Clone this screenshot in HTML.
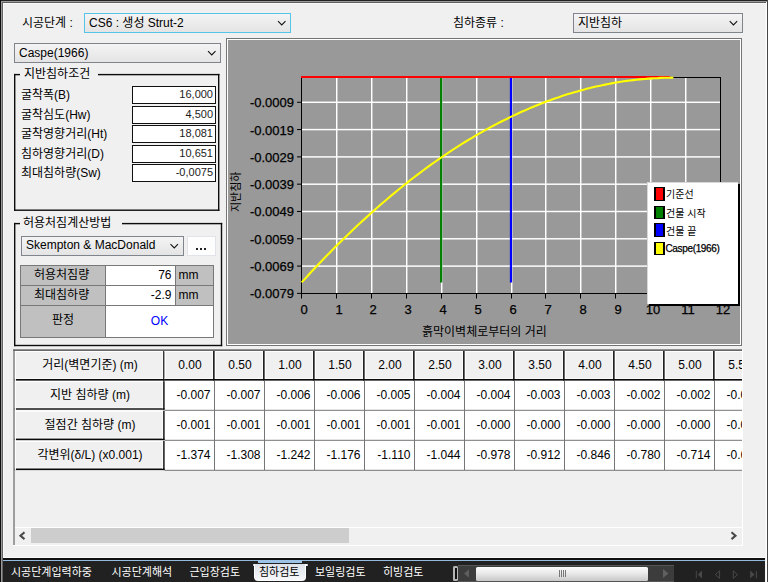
<!DOCTYPE html>
<html><head><meta charset="utf-8"><title>ui</title>
<style>
html,body{margin:0;padding:0}
body{width:768px;height:582px;overflow:hidden;background:#f0f0f0;position:relative;font-family:"Liberation Sans",sans-serif;font-size:12px;color:#000}
.a{position:absolute}
svg.o{position:absolute;left:0;top:0;pointer-events:none}
svg.o text{font-family:"Liberation Sans","Noto Sans CJK KR",sans-serif}
</style></head><body>
<div class="a" style="left:0px;top:0px;width:768px;height:1px;background:#222"></div><div class="a" style="left:1px;top:1px;width:766px;height:1px;background:#9a9a9a"></div><div class="a" style="left:2px;top:2px;width:765px;height:1px;background:#5e5e5e"></div><div class="a" style="left:3px;top:3px;width:762px;height:1px;background:#f9f9f9"></div><div class="a" style="left:0px;top:0px;width:1px;height:582px;background:#0e0e0e"></div><div class="a" style="left:1px;top:1px;width:1px;height:581px;background:#9a9a9a"></div><div class="a" style="left:2px;top:2px;width:1px;height:580px;background:#646464"></div><div class="a" style="left:3px;top:3px;width:1px;height:579px;background:#f9f9f9"></div><div class="a" style="left:765px;top:3px;width:1px;height:579px;background:#f4f4f4"></div><div class="a" style="left:766px;top:2px;width:1px;height:580px;background:#fff"></div><div class="a" style="left:767px;top:0px;width:1px;height:582px;background:#444"></div><div class="a" style="left:84px;top:13px;width:207px;height:20px;box-sizing:border-box;border:1px solid #56c4e8;background:linear-gradient(#f4f4f4,#e4e4e4);"></div><div class="a" style="left:573px;top:13px;width:170px;height:20px;box-sizing:border-box;border:1px solid #80848c;background:linear-gradient(#f4f4f4,#e4e4e4);"></div><div class="a" style="left:14px;top:43px;width:207px;height:20px;box-sizing:border-box;border:1px solid #80848c;background:linear-gradient(#f4f4f4,#e4e4e4);"></div><div class="a" style="left:132px;top:86px;width:84px;height:18px;box-sizing:border-box;border:1px solid #111;background:#fff"></div><div class="a" style="left:132px;top:106px;width:84px;height:18px;box-sizing:border-box;border:1px solid #111;background:#fff"></div><div class="a" style="left:132px;top:125px;width:84px;height:18px;box-sizing:border-box;border:1px solid #111;background:#fff"></div><div class="a" style="left:132px;top:145px;width:84px;height:18px;box-sizing:border-box;border:1px solid #111;background:#fff"></div><div class="a" style="left:132px;top:164px;width:84px;height:18px;box-sizing:border-box;border:1px solid #111;background:#fff"></div><div class="a" style="left:21px;top:236px;width:163px;height:20px;box-sizing:border-box;border:1px solid #80848c;background:linear-gradient(#f4f4f4,#e4e4e4);"></div><div class="a" style="left:186.5px;top:235.5px;width:29.5px;height:20.5px;box-sizing:border-box;border:1px solid #e0e3e8;background:#fdfdfd"></div><div class="a" style="left:196px;top:248px;width:2px;height:2px;background:#222"></div><div class="a" style="left:200px;top:248px;width:2px;height:2px;background:#222"></div><div class="a" style="left:204px;top:248px;width:2px;height:2px;background:#222"></div><div class="a" style="left:20px;top:265px;width:194px;height:73px;background:#787878"></div><div class="a" style="left:21px;top:266px;width:84px;height:19px;background:#c0c0c0"></div><div class="a" style="left:106px;top:266px;width:69px;height:19px;background:#fff"></div><div class="a" style="left:176px;top:266px;width:37px;height:19px;background:#c0c0c0"></div><div class="a" style="left:21px;top:286px;width:84px;height:19px;background:#c0c0c0"></div><div class="a" style="left:106px;top:286px;width:69px;height:19px;background:#fff"></div><div class="a" style="left:176px;top:286px;width:37px;height:19px;background:#c0c0c0"></div><div class="a" style="left:21px;top:306px;width:84px;height:31px;background:#c0c0c0"></div><div class="a" style="left:106px;top:306px;width:107px;height:31px;background:#fff"></div><div class="a" style="left:106px;top:265px;width:65.5px;height:20px;line-height:20px;text-align:right;font-size:12px;color:#000;white-space:nowrap;">76</div><div class="a" style="left:106px;top:285px;width:65.5px;height:20px;line-height:20px;text-align:right;font-size:12px;color:#000;white-space:nowrap;">-2.9</div><div class="a" style="left:178.5px;top:265px;width:30px;height:20px;line-height:20px;text-align:left;font-size:12px;color:#000;white-space:nowrap;">mm</div><div class="a" style="left:178.5px;top:285px;width:30px;height:20px;line-height:20px;text-align:left;font-size:12px;color:#000;white-space:nowrap;">mm</div><div class="a" style="left:106px;top:306px;width:107px;height:31px;line-height:31px;text-align:center;font-size:12px;color:#0000ff;white-space:nowrap;">OK</div><div class="a" style="left:226px;top:38px;width:516px;height:308px;box-sizing:border-box;border:1px solid #747474;background:#fff"></div><div class="a" style="left:228px;top:40px;width:512px;height:304px;background:#999"></div><svg class="o" width="768" height="582" viewBox="0 0 768 582"><rect x="336" y="78" width="1.45" height="215" fill="#fff"/><rect x="371" y="78" width="1.45" height="215" fill="#fff"/><rect x="406" y="78" width="1.45" height="215" fill="#fff"/><rect x="441" y="78" width="1.45" height="215" fill="#fff"/><rect x="476" y="78" width="1.45" height="215" fill="#fff"/><rect x="511" y="78" width="1.45" height="215" fill="#fff"/><rect x="545" y="78" width="1.45" height="215" fill="#fff"/><rect x="580" y="78" width="1.45" height="215" fill="#fff"/><rect x="615" y="78" width="1.45" height="215" fill="#fff"/><rect x="650" y="78" width="1.45" height="215" fill="#fff"/><rect x="685" y="78" width="1.45" height="215" fill="#fff"/><rect x="302" y="101.57" width="418" height="1.45" fill="#fff"/><rect x="302" y="128.87" width="418" height="1.45" fill="#fff"/><rect x="302" y="156.17" width="418" height="1.45" fill="#fff"/><rect x="302" y="183.47" width="418" height="1.45" fill="#fff"/><rect x="302" y="210.77" width="418" height="1.45" fill="#fff"/><rect x="302" y="238.07" width="418" height="1.45" fill="#fff"/><rect x="302" y="265.37" width="418" height="1.45" fill="#fff"/><rect x="301" y="76" width="1" height="218" fill="#000"/><rect x="301" y="293" width="420" height="1" fill="#000"/><rect x="720" y="77" width="1" height="217" fill="#000"/><rect x="670" y="77" width="51" height="1" fill="#000"/><rect x="297" y="101.77" width="4" height="1" fill="#000"/><rect x="297" y="129.07" width="4" height="1" fill="#000"/><rect x="297" y="156.37" width="4" height="1" fill="#000"/><rect x="297" y="183.67" width="4" height="1" fill="#000"/><rect x="297" y="210.97" width="4" height="1" fill="#000"/><rect x="297" y="238.27" width="4" height="1" fill="#000"/><rect x="297" y="265.57" width="4" height="1" fill="#000"/><rect x="297" y="292.87" width="4" height="1" fill="#000"/><rect x="301" y="294" width="1" height="4.5" fill="#000"/><rect x="336" y="294" width="1" height="4.5" fill="#000"/><rect x="371" y="294" width="1" height="4.5" fill="#000"/><rect x="406" y="294" width="1" height="4.5" fill="#000"/><rect x="441" y="294" width="1" height="4.5" fill="#000"/><rect x="476" y="294" width="1" height="4.5" fill="#000"/><rect x="511" y="294" width="1" height="4.5" fill="#000"/><rect x="545" y="294" width="1" height="4.5" fill="#000"/><rect x="580" y="294" width="1" height="4.5" fill="#000"/><rect x="615" y="294" width="1" height="4.5" fill="#000"/><rect x="650" y="294" width="1" height="4.5" fill="#000"/><rect x="685" y="294" width="1" height="4.5" fill="#000"/><rect x="720" y="294" width="1" height="4.5" fill="#000"/><rect x="301" y="76" width="369" height="2" fill="#ff0000"/><rect x="440.04" y="78" width="2.2" height="204.5" fill="#008000"/><rect x="509.86" y="78" width="2.2" height="204.5" fill="#0000ff"/><polyline points="301.6,282.4 304.7,279.1 307.8,275.7 310.9,272.3 314.0,269.0 317.1,265.7 320.2,262.5 323.3,259.3 326.4,256.1 329.5,252.9 332.6,249.7 335.7,246.6 338.8,243.5 341.9,240.5 345.0,237.5 348.1,234.5 351.2,231.5 354.3,228.5 357.4,225.6 360.5,222.7 363.6,219.9 366.7,217.1 369.8,214.3 372.9,211.5 376.0,208.7 379.1,206.0 382.2,203.3 385.3,200.7 388.4,198.0 391.5,195.4 394.6,192.9 397.7,190.3 400.8,187.8 403.9,185.3 407.0,182.9 410.0,180.4 413.1,178.0 416.2,175.7 419.3,173.3 422.4,171.0 425.5,168.7 428.6,166.4 431.7,164.2 434.8,162.0 437.9,159.8 441.0,157.7 444.1,155.6 447.2,153.5 450.3,151.4 453.4,149.4 456.5,147.4 459.6,145.4 462.7,143.4 465.8,141.5 468.9,139.6 472.0,137.8 475.1,135.9 478.2,134.1 481.3,132.4 484.4,130.6 487.5,128.9 490.6,127.2 493.7,125.5 496.8,123.9 499.9,122.3 503.0,120.7 506.1,119.2 509.2,117.6 512.3,116.1 515.4,114.7 518.5,113.2 521.6,111.8 524.7,110.5 527.8,109.1 530.9,107.8 534.0,106.5 537.1,105.2 540.2,104.0 543.3,102.8 546.4,101.6 549.5,100.5 552.6,99.3 555.7,98.2 558.8,97.2 561.9,96.1 565.0,95.1 568.1,94.1 571.2,93.2 574.3,92.3 577.4,91.4 580.5,90.5 583.6,89.7 586.7,88.8 589.8,88.1 592.9,87.3 596.0,86.6 599.1,85.9 602.2,85.2 605.3,84.6 608.4,84.0 611.5,83.4 614.6,82.8 617.7,82.3 620.8,81.8 623.8,81.3 626.9,80.9 630.0,80.5 633.1,80.1 636.2,79.7 639.3,79.4 642.4,79.1 645.5,78.9 648.6,78.6 651.7,78.4 654.8,78.2 657.9,78.1 661.0,77.9 664.1,77.8 667.2,77.8 670.3,77.7 673.4,77.7" fill="none" stroke="#ffff00" stroke-width="2.1" stroke-linejoin="round"/></svg><div class="a" style="left:236px;top:94.5px;width:58px;height:16px;line-height:16px;text-align:right;font-size:13px;color:#000;white-space:nowrap;-webkit-text-stroke:0.25px #000;">-0.0009</div><div class="a" style="left:236px;top:122.5px;width:58px;height:16px;line-height:16px;text-align:right;font-size:13px;color:#000;white-space:nowrap;-webkit-text-stroke:0.25px #000;">-0.0019</div><div class="a" style="left:236px;top:149.5px;width:58px;height:16px;line-height:16px;text-align:right;font-size:13px;color:#000;white-space:nowrap;-webkit-text-stroke:0.25px #000;">-0.0029</div><div class="a" style="left:236px;top:176.5px;width:58px;height:16px;line-height:16px;text-align:right;font-size:13px;color:#000;white-space:nowrap;-webkit-text-stroke:0.25px #000;">-0.0039</div><div class="a" style="left:236px;top:203.5px;width:58px;height:16px;line-height:16px;text-align:right;font-size:13px;color:#000;white-space:nowrap;-webkit-text-stroke:0.25px #000;">-0.0049</div><div class="a" style="left:236px;top:231.5px;width:58px;height:16px;line-height:16px;text-align:right;font-size:13px;color:#000;white-space:nowrap;-webkit-text-stroke:0.25px #000;">-0.0059</div><div class="a" style="left:236px;top:258.5px;width:58px;height:16px;line-height:16px;text-align:right;font-size:13px;color:#000;white-space:nowrap;-webkit-text-stroke:0.25px #000;">-0.0069</div><div class="a" style="left:236px;top:285.5px;width:58px;height:16px;line-height:16px;text-align:right;font-size:13px;color:#000;white-space:nowrap;-webkit-text-stroke:0.25px #000;">-0.0079</div><div class="a" style="left:289px;top:302px;width:30px;height:16px;line-height:16px;text-align:center;font-size:13px;color:#000;white-space:nowrap;-webkit-text-stroke:0.25px #000;">0</div><div class="a" style="left:324px;top:302px;width:30px;height:16px;line-height:16px;text-align:center;font-size:13px;color:#000;white-space:nowrap;-webkit-text-stroke:0.25px #000;">1</div><div class="a" style="left:358px;top:302px;width:30px;height:16px;line-height:16px;text-align:center;font-size:13px;color:#000;white-space:nowrap;-webkit-text-stroke:0.25px #000;">2</div><div class="a" style="left:393px;top:302px;width:30px;height:16px;line-height:16px;text-align:center;font-size:13px;color:#000;white-space:nowrap;-webkit-text-stroke:0.25px #000;">3</div><div class="a" style="left:428px;top:302px;width:30px;height:16px;line-height:16px;text-align:center;font-size:13px;color:#000;white-space:nowrap;-webkit-text-stroke:0.25px #000;">4</div><div class="a" style="left:463px;top:302px;width:30px;height:16px;line-height:16px;text-align:center;font-size:13px;color:#000;white-space:nowrap;-webkit-text-stroke:0.25px #000;">5</div><div class="a" style="left:498px;top:302px;width:30px;height:16px;line-height:16px;text-align:center;font-size:13px;color:#000;white-space:nowrap;-webkit-text-stroke:0.25px #000;">6</div><div class="a" style="left:533px;top:302px;width:30px;height:16px;line-height:16px;text-align:center;font-size:13px;color:#000;white-space:nowrap;-webkit-text-stroke:0.25px #000;">7</div><div class="a" style="left:568px;top:302px;width:30px;height:16px;line-height:16px;text-align:center;font-size:13px;color:#000;white-space:nowrap;-webkit-text-stroke:0.25px #000;">8</div><div class="a" style="left:603px;top:302px;width:30px;height:16px;line-height:16px;text-align:center;font-size:13px;color:#000;white-space:nowrap;-webkit-text-stroke:0.25px #000;">9</div><div class="a" style="left:638px;top:302px;width:30px;height:16px;line-height:16px;text-align:center;font-size:13px;color:#000;white-space:nowrap;-webkit-text-stroke:0.25px #000;">10</div><div class="a" style="left:673px;top:302px;width:30px;height:16px;line-height:16px;text-align:center;font-size:13px;color:#000;white-space:nowrap;-webkit-text-stroke:0.25px #000;">11</div><div class="a" style="left:708px;top:302px;width:30px;height:16px;line-height:16px;text-align:center;font-size:13px;color:#000;white-space:nowrap;-webkit-text-stroke:0.25px #000;">12</div><div class="a" style="left:647px;top:182px;width:91px;height:122px;background:#d8d8d8"></div><div class="a" style="left:648px;top:183px;width:90px;height:121px;background:#fff"></div><div class="a" style="left:738px;top:184px;width:2px;height:122px;background:#000"></div><div class="a" style="left:649px;top:304px;width:91px;height:2px;background:#000"></div><div class="a" style="left:654px;top:187px;width:11px;height:14px;background:#000"></div><div class="a" style="left:655.5px;top:188px;width:7.5px;height:11.5px;background:#ff0000"></div><div class="a" style="left:654px;top:206px;width:11px;height:13px;background:#000"></div><div class="a" style="left:655.5px;top:207px;width:7.5px;height:10.5px;background:#008000"></div><div class="a" style="left:654px;top:223px;width:11px;height:14px;background:#000"></div><div class="a" style="left:655.5px;top:224px;width:7.5px;height:11.5px;background:#0000ff"></div><div class="a" style="left:654px;top:242px;width:11px;height:13px;background:#000"></div><div class="a" style="left:655.5px;top:243px;width:7.5px;height:10.5px;background:#ffff00"></div><div class="a" style="left:665.5px;top:242px;width:70px;height:14px;line-height:14px;text-align:left;font-size:10px;color:#000;white-space:nowrap;letter-spacing:-0.35px;-webkit-text-stroke:0.25px #000;">Caspe(1966)</div><div class="a" style="left:13px;top:350px;width:730px;height:196px;background:#fff"></div><div class="a" style="left:14px;top:351px;width:728px;height:194px;background:#f0f0f0"></div><svg class="o" width="768" height="582" viewBox="0 0 768 582"><clipPath id="c139850923547568"><rect x="14" y="351" width="728" height="194"/></clipPath><g clip-path="url(#c139850923547568)"><rect x="164.6" y="380.6" width="600" height="89.5" fill="#fff"/><rect x="14" y="350.8" width="151" height="1.2" fill="#fff"/><rect x="14" y="378" width="151" height="1" fill="#fafafa"/><rect x="14" y="379" width="150.6" height="1.6" fill="#0a0a0a"/><rect x="163.1" y="351" width="1.5" height="29.6" fill="#0a0a0a"/><rect x="162.1" y="351" width="1" height="28" fill="#fafafa"/><rect x="14" y="381" width="151" height="1.2" fill="#fff"/><rect x="14" y="407.3" width="151" height="1" fill="#fafafa"/><rect x="14" y="408.3" width="150.6" height="1.4" fill="#0a0a0a"/><rect x="163.1" y="381.2" width="1.5" height="28.5" fill="#0a0a0a"/><rect x="162.1" y="381.2" width="1" height="27.1" fill="#fafafa"/><rect x="14" y="410.5" width="151" height="1.2" fill="#fff"/><rect x="14" y="437.6" width="151" height="1" fill="#fafafa"/><rect x="14" y="438.6" width="150.6" height="1.6" fill="#0a0a0a"/><rect x="163.1" y="410.7" width="1.5" height="29.5" fill="#0a0a0a"/><rect x="162.1" y="410.7" width="1" height="27.9" fill="#fafafa"/><rect x="14" y="440.8" width="151" height="1.2" fill="#fff"/><rect x="14" y="467.5" width="151" height="1" fill="#fafafa"/><rect x="14" y="468.5" width="150.6" height="1.6" fill="#0a0a0a"/><rect x="163.1" y="441" width="1.5" height="29.1" fill="#0a0a0a"/><rect x="162.1" y="441" width="1" height="27.5" fill="#fafafa"/><rect x="14.75" y="351" width="1.2" height="119" fill="#fff"/><rect x="164.6" y="351" width="1.2" height="28" fill="#fff"/><rect x="164.6" y="351" width="600" height="1" fill="#fff"/><rect x="164.6" y="378" width="600" height="1" fill="#fafafa"/><rect x="212.1" y="351" width="1" height="28" fill="#fafafa"/><rect x="214.6" y="351" width="1.2" height="28" fill="#fff"/><rect x="262.1" y="351" width="1" height="28" fill="#fafafa"/><rect x="264.6" y="351" width="1.2" height="28" fill="#fff"/><rect x="312.1" y="351" width="1" height="28" fill="#fafafa"/><rect x="314.6" y="351" width="1.2" height="28" fill="#fff"/><rect x="362.1" y="351" width="1" height="28" fill="#fafafa"/><rect x="364.6" y="351" width="1.2" height="28" fill="#fff"/><rect x="412.1" y="351" width="1" height="28" fill="#fafafa"/><rect x="414.6" y="351" width="1.2" height="28" fill="#fff"/><rect x="462.1" y="351" width="1" height="28" fill="#fafafa"/><rect x="464.6" y="351" width="1.2" height="28" fill="#fff"/><rect x="512.1" y="351" width="1" height="28" fill="#fafafa"/><rect x="514.6" y="351" width="1.2" height="28" fill="#fff"/><rect x="562.1" y="351" width="1" height="28" fill="#fafafa"/><rect x="564.6" y="351" width="1.2" height="28" fill="#fff"/><rect x="612.1" y="351" width="1" height="28" fill="#fafafa"/><rect x="614.6" y="351" width="1.2" height="28" fill="#fff"/><rect x="662.1" y="351" width="1" height="28" fill="#fafafa"/><rect x="664.6" y="351" width="1.2" height="28" fill="#fff"/><rect x="712.1" y="351" width="1" height="28" fill="#fafafa"/><rect x="714.6" y="351" width="1.2" height="28" fill="#fff"/><rect x="762.1" y="351" width="1" height="28" fill="#fafafa"/><rect x="764.6" y="351" width="1.2" height="28" fill="#fff"/><rect x="213.1" y="350" width="1.5" height="30.6" fill="#0a0a0a"/><rect x="263.1" y="350" width="1.5" height="30.6" fill="#0a0a0a"/><rect x="313.1" y="350" width="1.5" height="30.6" fill="#0a0a0a"/><rect x="363.1" y="350" width="1.5" height="30.6" fill="#0a0a0a"/><rect x="413.1" y="350" width="1.5" height="30.6" fill="#0a0a0a"/><rect x="463.1" y="350" width="1.5" height="30.6" fill="#0a0a0a"/><rect x="513.1" y="350" width="1.5" height="30.6" fill="#0a0a0a"/><rect x="563.1" y="350" width="1.5" height="30.6" fill="#0a0a0a"/><rect x="613.1" y="350" width="1.5" height="30.6" fill="#0a0a0a"/><rect x="663.1" y="350" width="1.5" height="30.6" fill="#0a0a0a"/><rect x="713.1" y="350" width="1.5" height="30.6" fill="#0a0a0a"/><rect x="763.1" y="350" width="1.5" height="30.6" fill="#0a0a0a"/><rect x="164.6" y="379" width="600" height="1.6" fill="#0a0a0a"/><rect x="214" y="380.6" width="1" height="89.5" fill="#767676"/><rect x="264" y="380.6" width="1" height="89.5" fill="#767676"/><rect x="314" y="380.6" width="1" height="89.5" fill="#767676"/><rect x="364" y="380.6" width="1" height="89.5" fill="#767676"/><rect x="414" y="380.6" width="1" height="89.5" fill="#767676"/><rect x="464" y="380.6" width="1" height="89.5" fill="#767676"/><rect x="514" y="380.6" width="1" height="89.5" fill="#767676"/><rect x="564" y="380.6" width="1" height="89.5" fill="#767676"/><rect x="614" y="380.6" width="1" height="89.5" fill="#767676"/><rect x="664" y="380.6" width="1" height="89.5" fill="#767676"/><rect x="714" y="380.6" width="1" height="89.5" fill="#767676"/><rect x="764" y="380.6" width="1" height="89.5" fill="#767676"/><rect x="164.6" y="409.8" width="600" height="1" fill="#767676"/><rect x="164.6" y="439.8" width="600" height="1" fill="#767676"/><rect x="164.6" y="469.8" width="600" height="1" fill="#767676"/></g></svg><div class="a" style="left:0;top:0;width:742px;height:545px;overflow:hidden"><div class="a" style="left:165px;top:355px;width:50px;height:20px;line-height:20px;text-align:center;font-size:12px;color:#000;white-space:nowrap;">0.00</div><div class="a" style="left:165px;top:385px;width:45.5px;height:20px;line-height:20px;text-align:right;font-size:12px;color:#000;white-space:nowrap;">-0.007</div><div class="a" style="left:165px;top:415px;width:45.5px;height:20px;line-height:20px;text-align:right;font-size:12px;color:#000;white-space:nowrap;">-0.001</div><div class="a" style="left:165px;top:445px;width:45.5px;height:20px;line-height:20px;text-align:right;font-size:12px;color:#000;white-space:nowrap;">-1.374</div><div class="a" style="left:215px;top:355px;width:50px;height:20px;line-height:20px;text-align:center;font-size:12px;color:#000;white-space:nowrap;">0.50</div><div class="a" style="left:215px;top:385px;width:45.5px;height:20px;line-height:20px;text-align:right;font-size:12px;color:#000;white-space:nowrap;">-0.007</div><div class="a" style="left:215px;top:415px;width:45.5px;height:20px;line-height:20px;text-align:right;font-size:12px;color:#000;white-space:nowrap;">-0.001</div><div class="a" style="left:215px;top:445px;width:45.5px;height:20px;line-height:20px;text-align:right;font-size:12px;color:#000;white-space:nowrap;">-1.308</div><div class="a" style="left:265px;top:355px;width:50px;height:20px;line-height:20px;text-align:center;font-size:12px;color:#000;white-space:nowrap;">1.00</div><div class="a" style="left:265px;top:385px;width:45.5px;height:20px;line-height:20px;text-align:right;font-size:12px;color:#000;white-space:nowrap;">-0.006</div><div class="a" style="left:265px;top:415px;width:45.5px;height:20px;line-height:20px;text-align:right;font-size:12px;color:#000;white-space:nowrap;">-0.001</div><div class="a" style="left:265px;top:445px;width:45.5px;height:20px;line-height:20px;text-align:right;font-size:12px;color:#000;white-space:nowrap;">-1.242</div><div class="a" style="left:315px;top:355px;width:50px;height:20px;line-height:20px;text-align:center;font-size:12px;color:#000;white-space:nowrap;">1.50</div><div class="a" style="left:315px;top:385px;width:45.5px;height:20px;line-height:20px;text-align:right;font-size:12px;color:#000;white-space:nowrap;">-0.006</div><div class="a" style="left:315px;top:415px;width:45.5px;height:20px;line-height:20px;text-align:right;font-size:12px;color:#000;white-space:nowrap;">-0.001</div><div class="a" style="left:315px;top:445px;width:45.5px;height:20px;line-height:20px;text-align:right;font-size:12px;color:#000;white-space:nowrap;">-1.176</div><div class="a" style="left:365px;top:355px;width:50px;height:20px;line-height:20px;text-align:center;font-size:12px;color:#000;white-space:nowrap;">2.00</div><div class="a" style="left:365px;top:385px;width:45.5px;height:20px;line-height:20px;text-align:right;font-size:12px;color:#000;white-space:nowrap;">-0.005</div><div class="a" style="left:365px;top:415px;width:45.5px;height:20px;line-height:20px;text-align:right;font-size:12px;color:#000;white-space:nowrap;">-0.001</div><div class="a" style="left:365px;top:445px;width:45.5px;height:20px;line-height:20px;text-align:right;font-size:12px;color:#000;white-space:nowrap;">-1.110</div><div class="a" style="left:415px;top:355px;width:50px;height:20px;line-height:20px;text-align:center;font-size:12px;color:#000;white-space:nowrap;">2.50</div><div class="a" style="left:415px;top:385px;width:45.5px;height:20px;line-height:20px;text-align:right;font-size:12px;color:#000;white-space:nowrap;">-0.004</div><div class="a" style="left:415px;top:415px;width:45.5px;height:20px;line-height:20px;text-align:right;font-size:12px;color:#000;white-space:nowrap;">-0.001</div><div class="a" style="left:415px;top:445px;width:45.5px;height:20px;line-height:20px;text-align:right;font-size:12px;color:#000;white-space:nowrap;">-1.044</div><div class="a" style="left:465px;top:355px;width:50px;height:20px;line-height:20px;text-align:center;font-size:12px;color:#000;white-space:nowrap;">3.00</div><div class="a" style="left:465px;top:385px;width:45.5px;height:20px;line-height:20px;text-align:right;font-size:12px;color:#000;white-space:nowrap;">-0.004</div><div class="a" style="left:465px;top:415px;width:45.5px;height:20px;line-height:20px;text-align:right;font-size:12px;color:#000;white-space:nowrap;">-0.000</div><div class="a" style="left:465px;top:445px;width:45.5px;height:20px;line-height:20px;text-align:right;font-size:12px;color:#000;white-space:nowrap;">-0.978</div><div class="a" style="left:515px;top:355px;width:50px;height:20px;line-height:20px;text-align:center;font-size:12px;color:#000;white-space:nowrap;">3.50</div><div class="a" style="left:515px;top:385px;width:45.5px;height:20px;line-height:20px;text-align:right;font-size:12px;color:#000;white-space:nowrap;">-0.003</div><div class="a" style="left:515px;top:415px;width:45.5px;height:20px;line-height:20px;text-align:right;font-size:12px;color:#000;white-space:nowrap;">-0.000</div><div class="a" style="left:515px;top:445px;width:45.5px;height:20px;line-height:20px;text-align:right;font-size:12px;color:#000;white-space:nowrap;">-0.912</div><div class="a" style="left:565px;top:355px;width:50px;height:20px;line-height:20px;text-align:center;font-size:12px;color:#000;white-space:nowrap;">4.00</div><div class="a" style="left:565px;top:385px;width:45.5px;height:20px;line-height:20px;text-align:right;font-size:12px;color:#000;white-space:nowrap;">-0.003</div><div class="a" style="left:565px;top:415px;width:45.5px;height:20px;line-height:20px;text-align:right;font-size:12px;color:#000;white-space:nowrap;">-0.000</div><div class="a" style="left:565px;top:445px;width:45.5px;height:20px;line-height:20px;text-align:right;font-size:12px;color:#000;white-space:nowrap;">-0.846</div><div class="a" style="left:615px;top:355px;width:50px;height:20px;line-height:20px;text-align:center;font-size:12px;color:#000;white-space:nowrap;">4.50</div><div class="a" style="left:615px;top:385px;width:45.5px;height:20px;line-height:20px;text-align:right;font-size:12px;color:#000;white-space:nowrap;">-0.002</div><div class="a" style="left:615px;top:415px;width:45.5px;height:20px;line-height:20px;text-align:right;font-size:12px;color:#000;white-space:nowrap;">-0.000</div><div class="a" style="left:615px;top:445px;width:45.5px;height:20px;line-height:20px;text-align:right;font-size:12px;color:#000;white-space:nowrap;">-0.780</div><div class="a" style="left:665px;top:355px;width:50px;height:20px;line-height:20px;text-align:center;font-size:12px;color:#000;white-space:nowrap;">5.00</div><div class="a" style="left:665px;top:385px;width:45.5px;height:20px;line-height:20px;text-align:right;font-size:12px;color:#000;white-space:nowrap;">-0.002</div><div class="a" style="left:665px;top:415px;width:45.5px;height:20px;line-height:20px;text-align:right;font-size:12px;color:#000;white-space:nowrap;">-0.000</div><div class="a" style="left:665px;top:445px;width:45.5px;height:20px;line-height:20px;text-align:right;font-size:12px;color:#000;white-space:nowrap;">-0.714</div><div class="a" style="left:715px;top:355px;width:50px;height:20px;line-height:20px;text-align:center;font-size:12px;color:#000;white-space:nowrap;">5.50</div><div class="a" style="left:715px;top:385px;width:45.5px;height:20px;line-height:20px;text-align:right;font-size:12px;color:#000;white-space:nowrap;">-0.002</div><div class="a" style="left:715px;top:415px;width:45.5px;height:20px;line-height:20px;text-align:right;font-size:12px;color:#000;white-space:nowrap;">-0.000</div><div class="a" style="left:715px;top:445px;width:45.5px;height:20px;line-height:20px;text-align:right;font-size:12px;color:#000;white-space:nowrap;">-0.648</div></div><div class="a" style="left:15px;top:355px;width:150px;height:20px;line-height:20px;text-align:center;font-size:12px;color:#000;white-space:nowrap;font-family:'Liberation Sans','Noto Sans CJK KR',sans-serif;">거리(벽면기준) (m)</div><div class="a" style="left:15px;top:385px;width:150px;height:20px;line-height:20px;text-align:center;font-size:12px;color:#000;white-space:nowrap;font-family:'Liberation Sans','Noto Sans CJK KR',sans-serif;">지반 침하량 (m)</div><div class="a" style="left:15px;top:415px;width:150px;height:20px;line-height:20px;text-align:center;font-size:12px;color:#000;white-space:nowrap;font-family:'Liberation Sans','Noto Sans CJK KR',sans-serif;">절점간 침하량 (m)</div><div class="a" style="left:15px;top:445px;width:150px;height:20px;line-height:20px;text-align:center;font-size:12px;color:#000;white-space:nowrap;font-family:'Liberation Sans','Noto Sans CJK KR',sans-serif;">각변위(δ/L) (x0.001)</div><div class="a" style="left:14px;top:527px;width:728px;height:1px;background:#fff"></div><div class="a" style="left:14px;top:545px;width:729px;height:1px;background:#fff"></div><div class="a" style="left:31px;top:528px;width:318px;height:15px;background:#cdcdcd"></div><div class="a" style="left:3px;top:557px;width:762px;height:1px;background:#fafafa"></div><div class="a" style="left:3px;top:558px;width:762px;height:24px;background:#212121"></div><div class="a" style="left:3px;top:558px;width:762px;height:2px;background:#101010"></div><div class="a" style="left:3px;top:560px;width:762px;height:1px;background:#96bbe0"></div><div class="a" style="left:252.5px;top:563.6px;width:55px;height:2px;background:#f4f8fb;border-radius:1px"></div><div class="a" style="left:254px;top:564px;width:52px;height:17px;box-sizing:border-box;background:linear-gradient(#dde1e8,#eceff3 60%,#f6f7f9);border:1.2px solid #fbfdff;border-top:none;border-radius:0 0 4px 4px"></div><div class="a" style="left:258px;top:560px;width:44px;height:3px;background:#9dc3e6"></div><div class="a" style="left:453px;top:566px;width:221px;height:15px;background:#3c3c3c"></div><div class="a" style="left:453px;top:566px;width:5px;height:15px;background:#b4b4b4;border-radius:1.5px"></div><div class="a" style="left:455px;top:568px;width:1.5px;height:11px;background:#111"></div><div class="a" style="left:458px;top:565px;width:216px;height:1px;background:#555"></div><div class="a" style="left:476px;top:567px;width:172px;height:13.6px;background:linear-gradient(#fcfcfc,#e9e9e9 45%,#c8c8c8);border-radius:1.5px"></div><div class="a" style="left:458px;top:580.6px;width:216px;height:1px;background:#555"></div><div class="a" style="left:559px;top:570px;width:1px;height:7px;background:#777"></div><div class="a" style="left:561px;top:570px;width:1px;height:7px;background:#777"></div><div class="a" style="left:563px;top:570px;width:1px;height:7px;background:#777"></div><div class="a" style="left:565px;top:570px;width:1px;height:7px;background:#777"></div><svg class="o" width="768" height="582" viewBox="0 0 768 582"><path d="M278 21.2l3.75 3.75l3.75 -3.75" fill="none" stroke="#111" stroke-width="1.05"/><path d="M729.7 21.2l3.75 3.75l3.75 -3.75" fill="none" stroke="#111" stroke-width="1.05"/><path d="M208 51.2l3.75 3.75l3.75 -3.75" fill="none" stroke="#111" stroke-width="1.05"/><rect x="14" y="73.9" width="1.4" height="137" fill="#0c0c0c"/><rect x="218" y="73.9" width="1.4" height="137" fill="#0c0c0c"/><rect x="14" y="209.5" width="205.4" height="1.4" fill="#0c0c0c"/><rect x="14" y="73.9" width="6" height="1.4" fill="#0c0c0c"/><rect x="98" y="73.9" width="121.4" height="1.4" fill="#0c0c0c"/><rect x="14" y="222.9" width="1.4" height="123.3" fill="#0c0c0c"/><rect x="220.8" y="222.9" width="1.4" height="123.3" fill="#0c0c0c"/><rect x="14" y="344.8" width="208.2" height="1.4" fill="#0c0c0c"/><rect x="14" y="222.9" width="6" height="1.4" fill="#0c0c0c"/><rect x="122" y="222.9" width="100.2" height="1.4" fill="#0c0c0c"/><path d="M170.5 244.2l3.75 3.75l3.75 -3.75" fill="none" stroke="#111" stroke-width="1.05"/><rect x="13.25" y="349.3" width="1.5" height="195.7" fill="#808080"/><rect x="13.25" y="349.3" width="728.75" height="1.7" fill="#686868"/><path d="M24.5 532.3l-4 3.4l4 3.4" fill="none" stroke="#484848" stroke-width="2.1"/><path d="M731.5 532.3l4 3.4l-4 3.4" fill="none" stroke="#484848" stroke-width="2.1"/><text x="11" y="576" font-size="11" fill="#ffffff">시공단계입력하중</text><text x="111.5" y="576" font-size="11" fill="#ffffff">시공단계해석</text><text x="189.5" y="576" font-size="11" fill="#ffffff">근입장검토</text><text x="259" y="576" font-size="11" fill="#000">침하검토</text><text x="315" y="576" font-size="11" fill="#ffffff">보일링검토</text><text x="383" y="576" font-size="11" fill="#ffffff">히빙검토</text><path d="M469 569.2v8.6l-5 -4.3z" fill="#5e5e5e"/><path d="M663 569v9l5.5 -4.5z" fill="#606060"/><path d="M696.3 571v7.2" fill="none" stroke="#484848" stroke-width="1"/><path d="M702 570.6v8l-4.2 -4z" fill="#484848"/><path d="M719.6 570.8v7.6l-4.3 -3.8z" fill="none" stroke="#484848" stroke-width="1"/><path d="M733.3 570.8v7.6l4.3 -3.8z" fill="none" stroke="#484848" stroke-width="1"/><path d="M756.4 571v7.2" fill="none" stroke="#484848" stroke-width="1.1"/><path d="M750.2 570.6v8l4.4 -4z" fill="#484848"/></svg><svg class="o" width="768" height="582" viewBox="0 0 768 582"><text x="22" y="27" font-size="12" fill="#000">시공단계 :</text><text x="89" y="27" font-size="12" fill="#000">CS6 : 생성 Strut-2</text><text x="453" y="27" font-size="12" fill="#000">침하종류 :</text><text x="578" y="27" font-size="12" fill="#000">지반침하</text><text x="19" y="56.5" font-size="12" fill="#000">Caspe(1966)</text><text x="24" y="78" font-size="12" fill="#000">지반침하조건</text><text x="21" y="99" font-size="12" fill="#000">굴착폭(B)</text><text x="213" y="98" font-size="11" fill="#1c1c1c" text-anchor="end">16,000</text><text x="21" y="119" font-size="12" fill="#000">굴착심도(Hw)</text><text x="213" y="118" font-size="11" fill="#1c1c1c" text-anchor="end">4,500</text><text x="21" y="138" font-size="12" fill="#000">굴착영향거리(Ht)</text><text x="213" y="137" font-size="11" fill="#1c1c1c" text-anchor="end">18,081</text><text x="21" y="158" font-size="12" fill="#000">침하영향거리(D)</text><text x="213" y="157" font-size="11" fill="#1c1c1c" text-anchor="end">10,651</text><text x="21" y="177" font-size="12" fill="#000">최대침하량(Sw)</text><text x="213" y="176" font-size="11" fill="#1c1c1c" text-anchor="end">-0,0075</text><text x="23" y="227" font-size="12" fill="#000">허용처짐계산방법</text><text x="26" y="249" font-size="12" fill="#000">Skempton &amp; MacDonald</text><text x="34" y="279" font-size="12" fill="#000">허용처짐량</text><text x="34" y="299" font-size="12" fill="#000">최대침하량</text><text x="52" y="324" font-size="12" fill="#000">판정</text><text x="422" y="336" font-size="12" fill="#000">흙막이벽체로부터의 거리</text><text transform="translate(231 212) rotate(-90)" x="0" y="9" font-size="11" fill="#000">지반침하</text><text x="666" y="197.5" font-size="10" fill="#000">기준선</text><text x="666" y="216.5" font-size="10" fill="#000">건물 시작</text><text x="666" y="234.5" font-size="10" fill="#000">건물 끝</text></svg>
</body></html>
